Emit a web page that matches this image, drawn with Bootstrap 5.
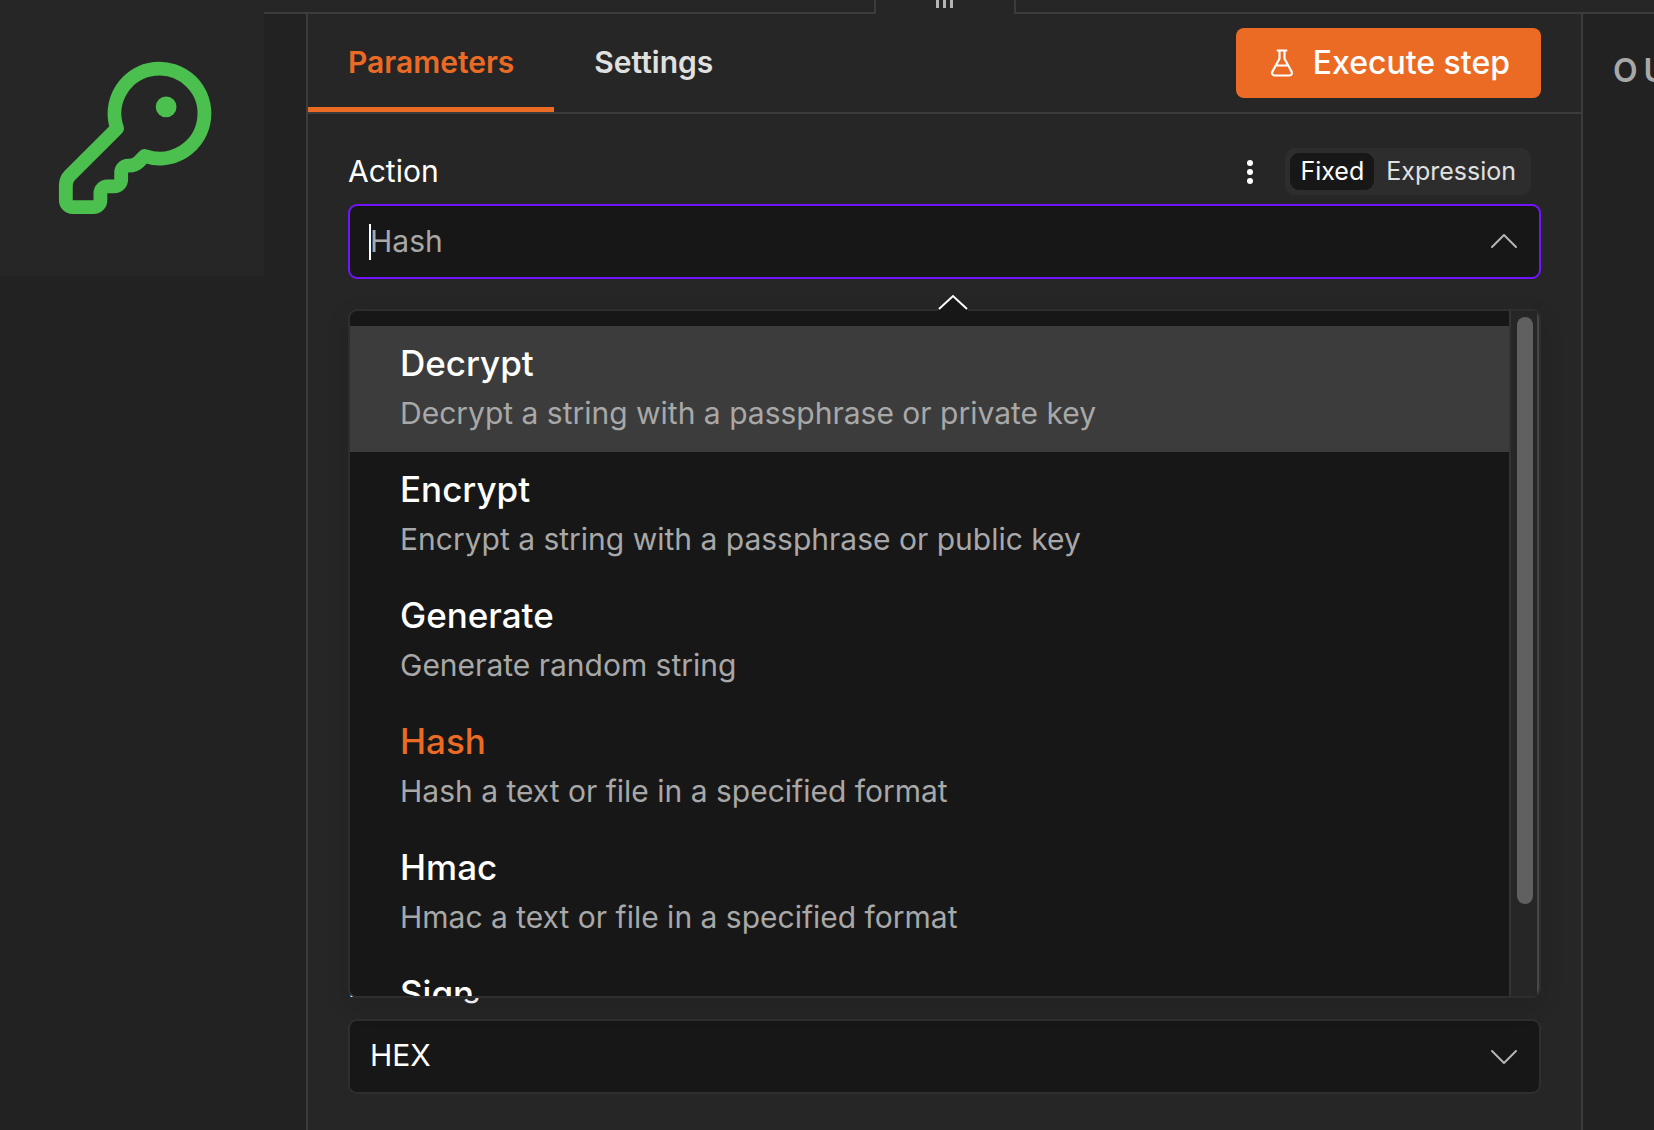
<!DOCTYPE html>
<html lang="en">
<head>
<meta charset="utf-8">
<meta name="viewport" content="width=device-width, initial-scale=1">
<title>Crypto – node parameters</title>
<link href="https://cdn.jsdelivr.net/npm/bootstrap@5.3.0/dist/css/bootstrap.min.css" rel="stylesheet">
<style>
  :root { --line: #3c3c3c; --surface: #262626; --canvas: #222222; --field: #171717; --brand: #eb6b24; --muted-text: #a8a8a8; --soft-text: #e0e0e0; }
  body { font-family: Inter, "Liberation Sans", sans-serif; font-size: 30px; line-height: 36px; color: #fff; background: var(--canvas); }
  .topbar { height: 14px; background: var(--surface); padding-left: 264px; }
  .topbar-line { border-bottom: 2px solid var(--line); }
  .line-start { width: 42px; }
  .line-end { width: 71px; }
  .drag-tab { width: 142px; border: solid var(--line); border-width: 0 2px; gap: 4px; }
  .drag-tab i { width: 3px; height: 8px; background: #b4b4b4; }
  .input-pane { width: 306px; }
  .node-tile { width: 264px; height: 276px; margin-top: -14px; background: var(--surface); padding: 55px 0 0 52px; }
  .node-tile svg { color: #4bc04f; }
  .ndv { border: solid var(--line); border-width: 0 2px; background: var(--surface); }
  .tabs-row { height: 100px; border-bottom: 2px solid var(--line); padding-right: 40px; }
  .tab-link { padding: 30px 40px 0; font-weight: 600; color: var(--soft-text); text-decoration: none; border-bottom: 5px solid transparent; }
  .tab-link.active { color: var(--brand); border-color: var(--brand); }
  .run-btn { --bs-btn-bg: var(--brand); --bs-btn-color: #fff; --bs-btn-hover-bg: #d95d18; --bs-btn-hover-color: #fff; height: 70px; padding: 0 31px; border: 0; border-radius: 8px; font-size: 32px; font-weight: 500; gap: 16px; }
  .params { padding: 34px 40px 36px; }
  .field-head { height: 47px; margin-bottom: 9px; padding-right: 10px; }
  .field-head label { padding-bottom: 2px; }
  .dots-btn { width: 30px; height: 36px; }
  .switch-group { background: #2d2d2d; border-radius: 10px; padding: 5px; margin-left: 20px; gap: 2px; }
  .switch-group .btn { height: 37px; padding: 0 10px; border: 0; border-radius: 9px; font-size: 25px; line-height: 37px; color: var(--soft-text); }
  .switch-group .btn.active { background: var(--field); color: #fff; }
  .field-box, .field-box:focus { height: 75px; padding: 0 60px 2px 20px; font-size: 30px; color: #fff; background: var(--field); border: 2px solid #2e2e2e; border-radius: 9px; box-shadow: none; }
  .field-box.open, .field-box.open:focus { border-color: #7314ff; }
  .field-box::placeholder { color: var(--muted-text); opacity: 1; }
  .chev { right: 24px; top: 24px; pointer-events: none; }
  .text-caret { left: 21px; top: 20px; width: 2px; height: 36px; background: #fff; }
  .second-field { margin-top: 684px; }
  .options { top: 105px; left: 0; right: 0; height: 689px; z-index: 5; border: 2px solid #2e2e2e; border-radius: 9px; background: var(--field); box-shadow: 0 8px 24px rgba(0,0,0,.12); }
  .options-arrow { left: 50%; top: -17px; margin-left: -7px; }
  .options-clip { border-radius: 7px; }
  .option-list { padding-top: 15px; }
  .option-row { height: 126px; padding: 15px 50px 0; color: #fff; }
  .option-row.hover { background: #3c3c3c; }
  .option-name { font-size: 35px; line-height: 44px; font-weight: 500; }
  .option-row.selected .option-name { color: var(--brand); }
  .option-note { margin-top: 10px; color: var(--muted-text); }
  .scroll-track { width: 30px; border: solid #333; border-width: 0 2px; border-right-color: #474747; background: var(--surface); padding: 6px 4px 6px 6px; }
  .scroll-thumb { width: 16px; height: 587px; border-radius: 8px; background: #606060; }
  .output-pane { width: 71px; padding: 37px 0 0 30px; }
  .pane-title { font-size: 32px; line-height: 40px; font-weight: 600; letter-spacing: 6px; color: #a8a8a8; }
</style>
</head>
<body class="vh-100 overflow-hidden d-flex flex-column">
  <header class="topbar d-flex flex-shrink-0">
    <div class="topbar-line line-start"></div>
    <div class="d-flex flex-grow-1">
      <div class="topbar-line flex-grow-1"></div>
      <div class="drag-tab d-flex justify-content-center"><i></i><i></i><i></i></div>
      <div class="topbar-line flex-grow-1"></div>
    </div>
    <div class="topbar-line line-end"></div>
  </header>
  <div class="d-flex flex-grow-1">
    <aside class="input-pane flex-shrink-0">
      <div class="node-tile">
        <svg class="d-block" width="166" height="166" viewBox="0 0 24 24" fill="none" stroke="currentColor" stroke-width="2" stroke-linecap="round" stroke-linejoin="round" role="img" aria-label="Key"><path d="M2.586 17.414A2 2 0 0 0 2 18.828V21a1 1 0 0 0 1 1h3a1 1 0 0 0 1-1v-1a1 1 0 0 1 1-1h1a1 1 0 0 0 1-1v-1a1 1 0 0 1 1-1h.172a2 2 0 0 0 1.414-.586l.814-.814a6.5 6.5 0 1 0-4-4z"/><circle cx="16.5" cy="7.5" r="1.5" fill="currentColor" stroke="none"/></svg>
      </div>
    </aside>
    <main class="ndv flex-grow-1">
      <div class="tabs-row d-flex align-items-center">
        <nav class="d-flex align-self-stretch me-auto">
          <a class="tab-link active" href="#parameters" aria-current="page">Parameters</a>
          <a class="tab-link" href="#settings">Settings</a>
        </nav>
        <button class="btn run-btn d-flex align-items-center" type="button">
          <svg width="30" height="30" viewBox="0 0 24 24" fill="none" stroke="currentColor" stroke-width="1.75" stroke-linecap="round" stroke-linejoin="round" aria-hidden="true"><path d="M14 2v6a2 2 0 0 0 .245.96l5.51 10.08A2 2 0 0 1 18 22H6a2 2 0 0 1-1.755-2.96l5.51-10.08A2 2 0 0 0 10 8V2M7 14h10M8.5 2h7"/></svg>
          Execute step
        </button>
      </div>
      <form class="params">
        <div class="field-head d-flex align-items-center">
          <label class="me-auto" for="action">Action</label>
          <button class="btn dots-btn p-0 border-0 d-flex align-items-center justify-content-center" type="button" aria-label="Options">
            <svg width="8" height="26" viewBox="0 0 8 26" fill="#fff"><circle cx="4" cy="4" r="3"/><circle cx="4" cy="13" r="3"/><circle cx="4" cy="22" r="3"/></svg>
          </button>
          <div class="switch-group d-flex" role="group" aria-label="Value mode">
            <button class="btn active" type="button">Fixed</button>
            <button class="btn" type="button">Expression</button>
          </div>
        </div>
        <div class="position-relative">
          <input class="form-control field-box open" id="action" type="text" placeholder="Hash" role="combobox" aria-expanded="true" aria-controls="action-options">
          <span class="text-caret position-absolute"></span>
          <svg class="chev position-absolute" width="26" height="26" viewBox="0 0 26 26" fill="none" stroke="#b4b4b4" stroke-width="2" stroke-linecap="round" stroke-linejoin="round" aria-hidden="true"><path d="M1 19L13 7L25 19"/></svg>
          <div class="options position-absolute">
            <svg class="options-arrow position-absolute" width="30" height="18" viewBox="0 0 30 18" fill="#171717" aria-hidden="true"><path d="M0 16L15 2L30 16V18H0z"/><path d="M1 15L15 2L29 15" fill="none" stroke="#fff" stroke-width="2"/></svg>
            <div class="options-clip d-flex h-100 overflow-hidden">
              <div class="option-list flex-grow-1 overflow-hidden" id="action-options" role="listbox">
                <div class="option-row hover" role="option"><div class="option-name">Decrypt</div><div class="option-note">Decrypt a string with a passphrase or private key</div></div>
                <div class="option-row" role="option"><div class="option-name">Encrypt</div><div class="option-note">Encrypt a string with a passphrase or public key</div></div>
                <div class="option-row" role="option"><div class="option-name">Generate</div><div class="option-note">Generate random string</div></div>
                <div class="option-row selected" role="option" aria-selected="true"><div class="option-name">Hash</div><div class="option-note">Hash a text or file in a specified format</div></div>
                <div class="option-row" role="option"><div class="option-name">Hmac</div><div class="option-note">Hmac a text or file in a specified format</div></div>
                <div class="option-row" role="option"><div class="option-name">Sign</div></div>
              </div>
              <div class="scroll-track flex-shrink-0"><div class="scroll-thumb"></div></div>
            </div>
          </div>
        </div>
        <div class="second-field">
          <div class="field-head d-flex align-items-center"><label for="encoding">Encoding</label></div>
          <div class="position-relative">
            <select class="form-select field-box" id="encoding"><option>HEX</option></select>
            <svg class="chev position-absolute" width="26" height="26" viewBox="0 0 26 26" fill="none" stroke="#b4b4b4" stroke-width="2" stroke-linecap="round" stroke-linejoin="round" aria-hidden="true"><path d="M1 8L13 20L25 8"/></svg>
          </div>
        </div>
      </form>
    </main>
    <aside class="output-pane flex-shrink-0 overflow-hidden"><div class="pane-title">OUTPUT</div></aside>
  </div>
  <script src="https://cdn.jsdelivr.net/npm/bootstrap@5.3.0/dist/js/bootstrap.bundle.min.js"></script>
</body>
</html>
